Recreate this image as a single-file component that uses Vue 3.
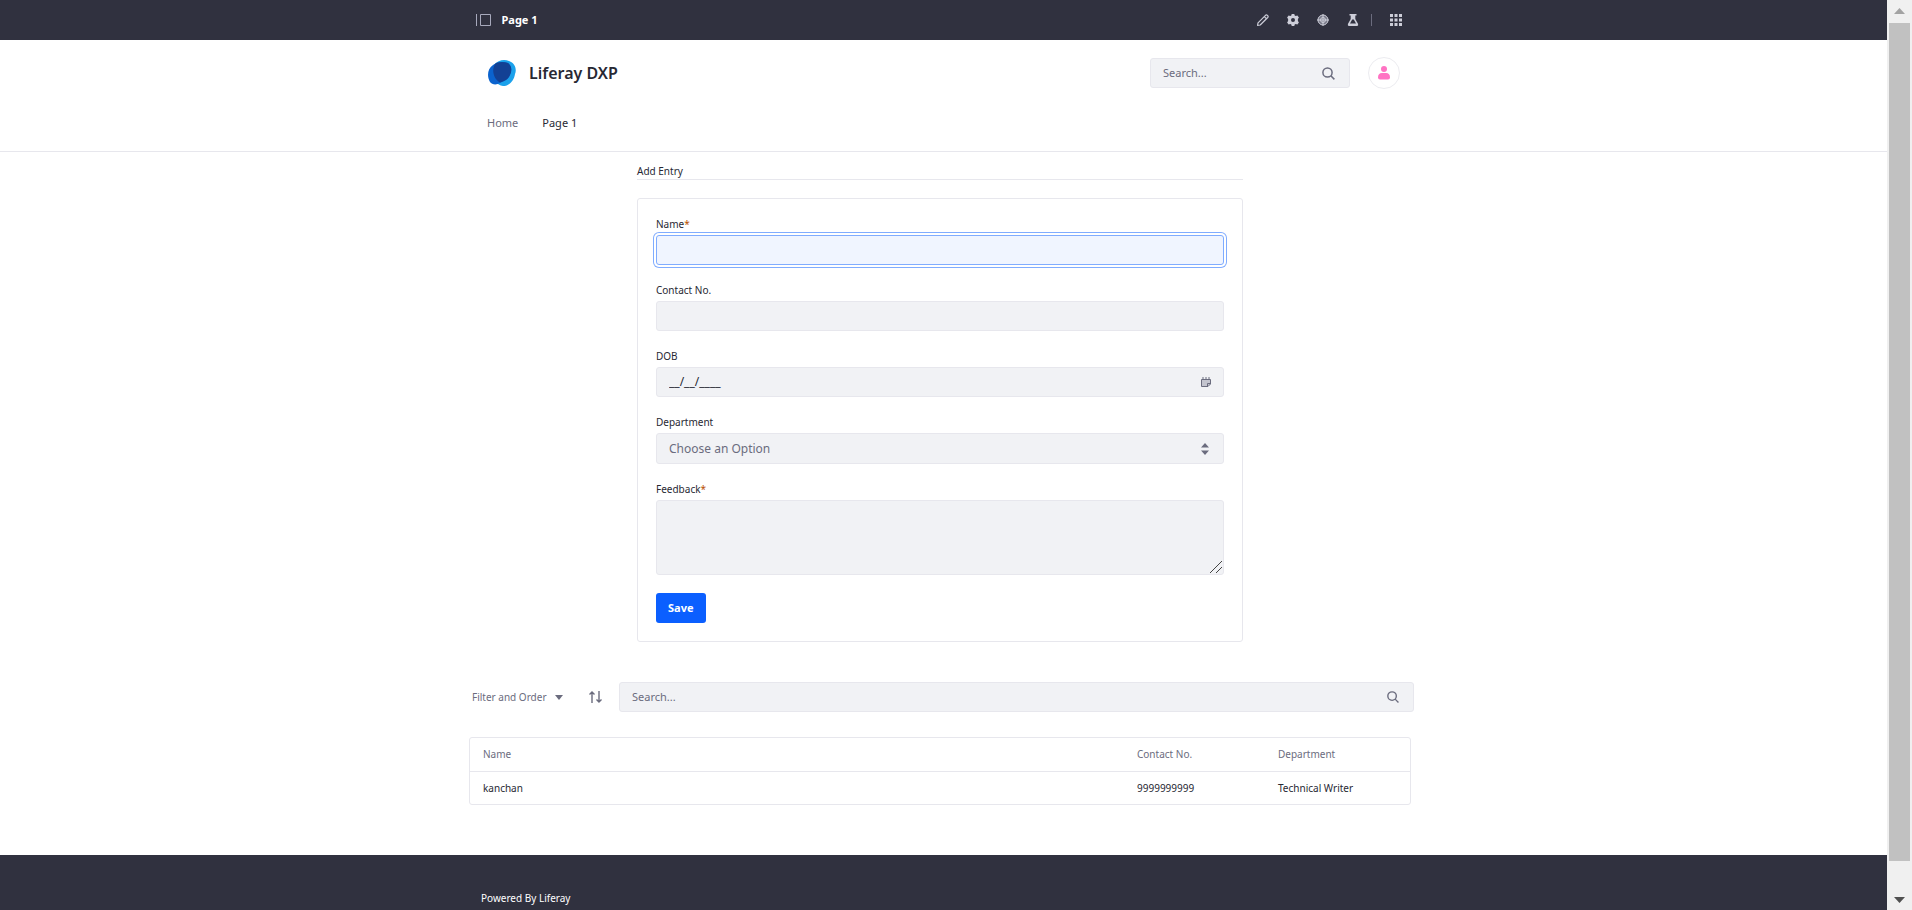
<script setup>
import { ref } from 'vue'

const form = ref({ name: '', contact: '', dob: '__/__/____', department: '', feedback: '' })
const siteSearch = ref('')
const listSearch = ref('')
const entries = ref([{ name: 'kanchan', contact: '9999999999', department: 'Technical Writer' }])
</script>

<template>
  <div class="window">
    <div class="page">
      <div class="control-bar">
        <div class="bar-inner">
          <div class="bar-title">
            <button class="icon-btn" type="button" aria-label="Toggle product menu">
              <svg width="16" height="14" viewBox="0 0 16 14" fill="none" stroke="#a7a9bc">
                <path d="M.5 1v12M4.500 1.500h10v11h-10z" />
              </svg>
            </button>
            <span>Page 1</span>
          </div>
          <div class="bar-tools">
            <button class="icon-btn" type="button" aria-label="Edit">
              <svg width="12" height="12" viewBox="0 0 12 12" fill="none" stroke="#cdced9" stroke-width="1.200" stroke-linejoin="round">
                <path d="M.6 11.400l.4-2.600L8.500 1.300q1-.9 1.900 0l.3.300q.9.900 0 1.900L3.200 11z" />
                <path d="M7.300 2.600l2.100 2.100" />
              </svg>
            </button>
            <button class="icon-btn" type="button" aria-label="Configure page">
              <svg width="12" height="12" viewBox="0 0 12 12" fill="#cdced9" fill-rule="evenodd">
                <path d="M4.700 0h2.600l.4 1.600 1 .5 1.700-.7L11.900 3.600l-1 1.400v2l1 1.400-1.500 2.200-1.700-.7-1 .5-.4 1.600H4.700l-.4-1.600-1-.5-1.700.7L.1 8.400l1-1.400V5l-1-1.400 1.500-2.200 1.700.7 1-.5zM6 4a2 2 0 1 0 0 4 2 2 0 0 0 0-4z" />
              </svg>
            </button>
            <button class="icon-btn" type="button" aria-label="Simulation">
              <svg width="12" height="12" viewBox="0 0 12 12" fill="none" stroke="#cdced9">
                <circle cx="6" cy="6" r="5" fill="#777887" />
                <circle cx="6" cy="6" r="2.500" />
                <path d="M6 0v12M0 6h12" />
              </svg>
            </button>
            <button class="icon-btn" type="button" aria-label="A/B test">
              <svg width="12" height="12" viewBox="0 0 12 12" fill="#cdced9" fill-rule="evenodd">
                <path d="M2.500 0h7v1.500H8.300v3.600l2.800 5q.5 1.900-1.100 1.900H2q-1.600 0-1.100-1.900l2.800-5V1.500H2.500zM5.200 5.500L3 9.500h6L6.800 5.500z" />
              </svg>
            </button>
            <span class="bar-rule"></span>
            <button class="icon-btn" type="button" aria-label="Applications menu">
              <svg width="12" height="12" viewBox="0 0 12 12" fill="#cdced9">
                <path d="M0 0h3v3H0zM4.500 0h3v3h-3zM9 0h3v3H9zM0 4.500h3v3H0zM4.500 4.500h3v3h-3zM9 4.500h3v3H9zM0 9h3v3H0zM4.500 9h3v3h-3zM9 9h3v3H9z" />
              </svg>
            </button>
          </div>
        </div>
      </div>

      <header class="site-header">
        <div class="header-inner">
          <div class="brand-row">
            <a class="brand" href="#">
              <svg width="30" height="28" viewBox="0 0 30 28">
                <path d="M7 6C11 1 17 0 22 2c6 2 8 8 6 13-1 7-6 12-12 12C8 27 2 13 7 6z" fill="#1ba1eb" />
                <path d="M6 6c4-3 10-4 15-2 4 3 4 8 2 12-2 5-6 6-10 8-3 2-8 2-10-1C0 18 0 10 6 6z" fill="#0b63ce" />
                <path d="M9 4c4-1.500 8-1.500 12 0 4 3 4 8 2 12-2 5-6 6-10 7.500C6 20 4 9 9 4z" fill="#134194" />
              </svg>
              <span>Liferay DXP</span>
            </a>
            <div class="user-tools">
              <form class="search site-search" role="search" @submit.prevent>
                <input v-model="siteSearch" type="text" placeholder="Search..." aria-label="Search the site" />
                <button class="icon-btn" type="submit" aria-label="Search">
                  <svg width="13" height="13" viewBox="0 0 13 13" fill="none" stroke="#6b6c7e" stroke-width="1.500">
                    <circle cx="5.500" cy="5.500" r="4.600" />
                    <path d="M8.800 8.800L12.400 12.400" />
                  </svg>
                </button>
              </form>
              <button class="avatar" type="button" aria-label="User menu">
                <svg width="12" height="14" viewBox="0 0 12 14" fill="#ff73c3">
                  <circle cx="6" cy="3" r="3" />
                  <path d="M0 11.500Q0 7 4 7h4q4 0 4 4.500 0 2-2 2H2q-2 0-2-2z" />
                </svg>
              </button>
            </div>
          </div>
          <nav class="site-nav">
            <a href="#">Home</a>
            <a href="#" class="current" aria-current="page">Page 1</a>
          </nav>
        </div>
      </header>

      <main class="content">
        <section class="entry">
          <h2>Add Entry</h2>
          <form class="card" @submit.prevent>
            <div class="field">
              <label for="name">Name<span class="req">*</span></label>
              <input id="name" v-model="form.name" class="control active" type="text" required />
            </div>
            <div class="field">
              <label for="contact">Contact No.</label>
              <input id="contact" v-model="form.contact" class="control" type="text" />
            </div>
            <div class="field">
              <label for="dob">DOB</label>
              <div class="control with-icon">
                <input id="dob" v-model="form.dob" type="text" />
                <button class="icon-btn" type="button" aria-label="Choose date">
                  <svg width="10" height="10" viewBox="0 0 10 10">
                    <path d="M.5 2.500h9v4.500l-2.500 2.500H.5z" fill="#c3c4ce" stroke="#6b6c7e" />
                    <path d="M6.500 9.500v-3h3" fill="none" stroke="#6b6c7e" />
                    <path d="M2 0v3M5 0v3M8 0v3" stroke="#6b6c7e" />
                  </svg>
                </button>
              </div>
            </div>
            <div class="field">
              <label for="department">Department</label>
              <div class="control with-icon select-box">
                <select id="department" v-model="form.department">
                  <option value="">Choose an Option</option>
                  <option>Technical Writer</option>
                </select>
                <svg width="8" height="12" viewBox="0 0 8 12" fill="#6b6c7e">
                  <path d="M0 4.500L4 0l4 4.500zM0 7.500L4 12l4-4.500z" />
                </svg>
              </div>
            </div>
            <div class="field">
              <label for="feedback">Feedback<span class="req">*</span></label>
              <textarea id="feedback" v-model="form.feedback" class="control area" required></textarea>
            </div>
            <button class="save" type="submit">Save</button>
          </form>
        </section>

        <section class="listing">
          <div class="toolbar">
            <button class="filter" type="button">
              Filter and Order
              <svg width="8" height="5" viewBox="0 0 8 5" fill="#6b6c7e"><path d="M0 0h8L4 5z" /></svg>
            </button>
            <button class="icon-btn sort" type="button" aria-label="Reverse sort direction">
              <svg width="13" height="12" viewBox="0 0 13 12" fill="none" stroke="#6b6c7e" stroke-width="1.400">
                <path d="M3 12V1M.5 3.500L3 1l2.500 2.500M10 0v11M7.500 8.500L10 11l2.500-2.500" />
              </svg>
            </button>
            <form class="search list-search" role="search" @submit.prevent>
              <input v-model="listSearch" type="text" placeholder="Search..." aria-label="Search entries" />
              <button class="icon-btn" type="submit" aria-label="Search">
                <svg width="12" height="12" viewBox="0 0 13 13" fill="none" stroke="#6b6c7e" stroke-width="1.500">
                  <circle cx="5.500" cy="5.500" r="4.600" />
                  <path d="M8.800 8.800L12.400 12.400" />
                </svg>
              </button>
            </form>
          </div>
          <div class="table-box">
            <table>
              <colgroup>
                <col />
                <col class="col-contact" />
                <col class="col-dept" />
              </colgroup>
              <thead>
                <tr><th>Name</th><th>Contact No.</th><th>Department</th></tr>
              </thead>
              <tbody>
                <tr v-for="e in entries" :key="e.contact">
                  <td>{{ e.name }}</td><td>{{ e.contact }}</td><td>{{ e.department }}</td>
                </tr>
              </tbody>
            </table>
          </div>
        </section>
      </main>

      <footer class="site-footer">
        <div class="footer-inner">Powered By <a href="#">Liferay</a></div>
      </footer>
    </div>

    <div class="scrollbar" aria-hidden="true">
      <svg width="11" height="6" viewBox="0 0 11 6" fill="#a3a3a3"><path d="M0 6h11L5.500 0z" /></svg>
      <div class="thumb"></div>
      <svg width="11" height="6" viewBox="0 0 11 6" fill="#505050"><path d="M0 0h11L5.500 6z" /></svg>
    </div>
  </div>
</template>

<style>
body {
  margin: 0;
}
</style>

<style scoped>
.window {
  display: flex;
  min-height: 100vh;
  background: #fff;
  color: #272833;
  font-family: "Noto Sans", "Open Sans", sans-serif;
  font-size: 10px;
  line-height: 14px;
}
.window * {
  box-sizing: border-box;
}
.page {
  flex: 1;
  min-width: 0;
  display: flex;
  flex-direction: column;
}
a {
  color: inherit;
  text-decoration: none;
}
svg {
  display: block;
  flex: none;
}
button,
input,
select,
textarea {
  font: inherit;
  color: inherit;
  margin: 0;
}
.icon-btn {
  border: 0;
  padding: 0;
  background: none;
  display: flex;
}

.control-bar {
  background: #30313f;
  padding-right: 10px;
}
.bar-inner {
  max-width: 926px;
  height: 40px;
  margin: 0 auto;
  display: flex;
  align-items: center;
  justify-content: space-between;
}
.bar-title {
  display: flex;
  align-items: center;
  gap: 10px;
  color: #fff;
  font-size: 11px;
  font-weight: 700;
}
.bar-tools {
  display: flex;
  align-items: center;
  gap: 18px;
}
.bar-rule {
  width: 1px;
  height: 12px;
  margin-left: -6px;
  background: #6b6c7e;
}

.site-header {
  border-bottom: 1px solid #e7e7ed;
}
.header-inner {
  max-width: 913px;
  margin: 0 auto;
  padding: 17px 0 21px;
}
.brand-row {
  display: flex;
  align-items: center;
  justify-content: space-between;
}
.brand {
  display: flex;
  align-items: center;
  gap: 12px;
  font-size: 16px;
  font-weight: 600;
  line-height: 24px;
}
.user-tools {
  display: flex;
  align-items: center;
  gap: 18px;
}
.search,
.control {
  border: 1px solid #e7e7ed;
  border-radius: 3px;
  background: #f1f2f5;
}
.search {
  display: flex;
  align-items: center;
  height: 30px;
  padding: 0 14px 0 12px;
}
.search input,
.with-icon input,
.with-icon select {
  flex: 1;
  min-width: 0;
  border: 0;
  padding: 0;
  background: none;
  outline: 0;
  font-size: 12px;
  line-height: 16px;
}
.search input {
  font-size: 11px;
}
.search input::placeholder {
  color: #6b6c7e;
  opacity: 1;
}
.site-search {
  width: 200px;
}
.avatar {
  width: 32px;
  height: 32px;
  padding: 0;
  display: flex;
  align-items: center;
  justify-content: center;
  border: 1px solid #ececf0;
  border-radius: 50%;
  background: #fff;
}
.site-nav {
  display: flex;
  gap: 24px;
  margin-top: 27px;
  color: #6b6c7e;
  font-size: 11px;
}
.site-nav .current {
  color: #272833;
}

.content {
  padding: 12px 7px 50px 0;
}
.entry {
  max-width: 606px;
  margin: 0 auto;
}
h2 {
  margin: 0 0 18px;
  padding-bottom: 1px;
  border-bottom: 1px solid #e7e7ed;
  font-size: 10px;
  line-height: 14px;
  font-weight: 400;
}
.card {
  display: flex;
  flex-direction: column;
  align-items: stretch;
  gap: 18px;
  padding: 18px;
  border: 1px solid #e7e7ed;
  border-radius: 3px;
}
.field {
  display: flex;
  flex-direction: column;
  gap: 4px;
}
.req {
  color: #b95000;
}
.control {
  width: 100%;
  height: 30px;
  padding: 0 12px;
  outline: 0;
}
.active {
  background: #f0f5ff;
  border-color: #80acff;
  box-shadow: 0 0 0 2px #fff, 0 0 0 3px #80acff;
}
.with-icon {
  display: flex;
  align-items: center;
}
.select-box {
  height: 31px;
  padding-right: 14px;
  color: #6b6c7e;
}
.with-icon select {
  appearance: none;
}
.area {
  display: block;
  height: 75px;
  resize: both;
}
.area::-webkit-resizer {
  background: url("data:image/svg+xml,%3Csvg xmlns='http://www.w3.org/2000/svg' width='15' height='15' fill='none' stroke='%23444'%3E%3Cpath d='M2 14L14 2M8 14L14 8'/%3E%3C/svg%3E") no-repeat right bottom;
}
.save {
  align-self: flex-start;
  height: 30px;
  padding: 0 12px;
  border: 0;
  border-radius: 3px;
  background: #0b5fff;
  color: #fff;
  font-size: 11px;
  font-weight: 700;
}

.listing {
  max-width: 942px;
  margin: 40px auto 0;
}
.toolbar {
  display: flex;
  align-items: center;
  margin-right: -3px;
  padding-left: 3px;
}
.filter {
  display: flex;
  align-items: center;
  justify-content: space-between;
  width: 91px;
  padding: 0;
  border: 0;
  background: none;
  color: #6b6c7e;
  white-space: nowrap;
}
.sort {
  margin: 0 17px 0 26px;
}
.list-search {
  flex: 1;
}
.table-box {
  margin-top: 25px;
  border: 1px solid #e7e7ed;
  border-radius: 3px;
}
table {
  width: 100%;
  table-layout: fixed;
  border-collapse: collapse;
}
.col-contact {
  width: 141px;
}
.col-dept {
  width: 145px;
}
th,
td {
  height: 33px;
  padding: 0 0 0 13px;
  text-align: left;
  font-weight: 400;
}
th {
  color: #6b6c7e;
}
tbody tr {
  border-top: 1px solid #e7e7ed;
}

.site-footer {
  flex: 1;
  background: #30313f;
  color: #fff;
}
.footer-inner {
  max-width: 925px;
  margin: 0 auto;
  padding-top: 36px;
}

.scrollbar {
  width: 25px;
  display: flex;
  flex-direction: column;
  align-items: center;
  padding: 8px 0 7px;
  background: #f0f0f0;
}
.thumb {
  flex: 1;
  width: 21px;
  margin: 9px 0 36px;
  background: #c1c1c1;
}
</style>
